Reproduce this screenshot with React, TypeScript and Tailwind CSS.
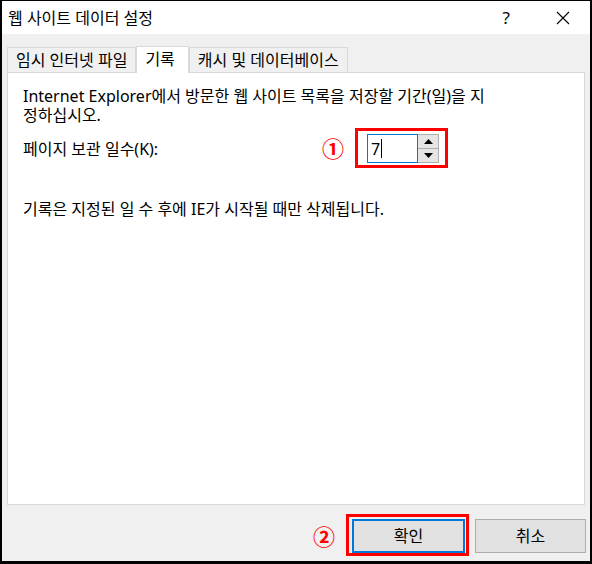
import React from "react";

const font = {
  fontFamily: '"Noto Sans", "Noto Sans CJK KR", sans-serif',
};

const Tab = ({ label, active }: { label: string; active?: boolean }) => (
  <div
    className={
      active
        ? "relative z-10 -mb-px h-[27px] border border-b-0 border-[#d9d9d9] bg-white pl-[8px] pr-[13px] pt-[1px] text-[16px] leading-[22px]"
        : "mt-[1px] h-[25px] border border-b-0 border-[#d9d9d9] bg-[#f0f0f0] px-[8px] text-[16px] leading-[24px]"
    }
  >
    {label}
  </div>
);

const Arrow = ({ up }: { up?: boolean }) => (
  <svg width="9" height="5" viewBox="0 0 9 5">
    {up ? <polygon points="0,5 9,5 4.5,0" fill="#000" /> : <polygon points="0,0 9,0 4.5,5" fill="#000" />}
  </svg>
);

export default function App() {
  return (
    <div
      className="relative flex h-[564px] w-[592px] flex-col border-l-2 border-r-2 border-t border-b-[3px] border-black bg-[#f0f0f0] text-black"
      style={font}
    >
      {/* title bar */}
      <div className="flex h-[33px] items-center bg-white pl-[6px]">
        <span className="text-[16px] leading-none">웹 사이트 데이터 설정</span>
        <span className="ml-auto mr-[46px] text-[17px] leading-none">?</span>
        <svg className="mr-[20px]" width="14" height="14" viewBox="0 0 14 14">
          <path d="M1 1 L13 13 M13 1 L1 13" stroke="#000" strokeWidth="1.1" />
        </svg>
      </div>

      {/* tabs */}
      <div className="mt-[12px] flex pl-[5px]">
        <Tab label="임시 인터넷 파일" />
        <Tab label="기록" active />
        <Tab label="캐시 및 데이터베이스" />
      </div>

      {/* panel */}
      <div className="mx-[5px] h-[433px] border border-[#d9d9d9] bg-white px-[15px] pt-[14px] text-[16px] leading-[18px]">
        <div className="h-[19px] whitespace-nowrap">
          Internet Explorer에서 방문한 웹 사이트 목록을 저장할 기간(일)을 지
        </div>
        <div className="h-[18px]">정하십시오.</div>
        <div className="mt-[10px] flex items-center">
          <div className="w-[344px]">페이지 보관 일수(K):</div>
          <div className="relative flex h-[29px]">
            <div className="flex w-[51px] items-center border border-[#0078d7] bg-white pl-[3px] text-[16px]">
              7<span className="ml-px h-[19px] w-px bg-black" />
            </div>
            <div className="flex w-[21px] flex-col border border-l-0 border-[#adadad]">
              <div className="flex flex-1 items-center justify-center border-b border-[#adadad] bg-[#e5e5e5]">
                <Arrow up />
              </div>
              <div className="flex flex-1 items-center justify-center bg-[#e5e5e5]">
                <Arrow />
              </div>
            </div>
            <div className="absolute -left-[12px] -top-[6px] h-[40px] w-[93px] border-[3px] border-[#ff0000]" />
            <div className="absolute -left-[45px] top-[1px] text-[22px] font-bold leading-[26px] text-[#ff0000]">
              ①
            </div>
          </div>
        </div>
        <p className="mt-[37px]">기록은 지정된 일 수 후에 IE가 시작될 때만 삭제됩니다.</p>
      </div>

      {/* buttons */}
      <div className="mt-[14px] flex justify-end gap-[10px] pr-[4px]">
        <div className="relative">
          <button className="h-[34px] w-[113px] border-2 border-[#0078d7] bg-[#e1e1e1] text-[16px]">
            확인
          </button>
          <div className="absolute -left-[6px] -top-[5px] h-[42px] w-[123px] border-[3px] border-[#ff0000]" />
          <div className="absolute -left-[39px] top-[4px] text-[22px] font-bold leading-[26px] text-[#ff0000]">
            ②
          </div>
        </div>
        <button className="h-[34px] w-[111px] border border-[#adadad] bg-[#e1e1e1] text-[16px]">
          취소
        </button>
      </div>
    </div>
  );
}
